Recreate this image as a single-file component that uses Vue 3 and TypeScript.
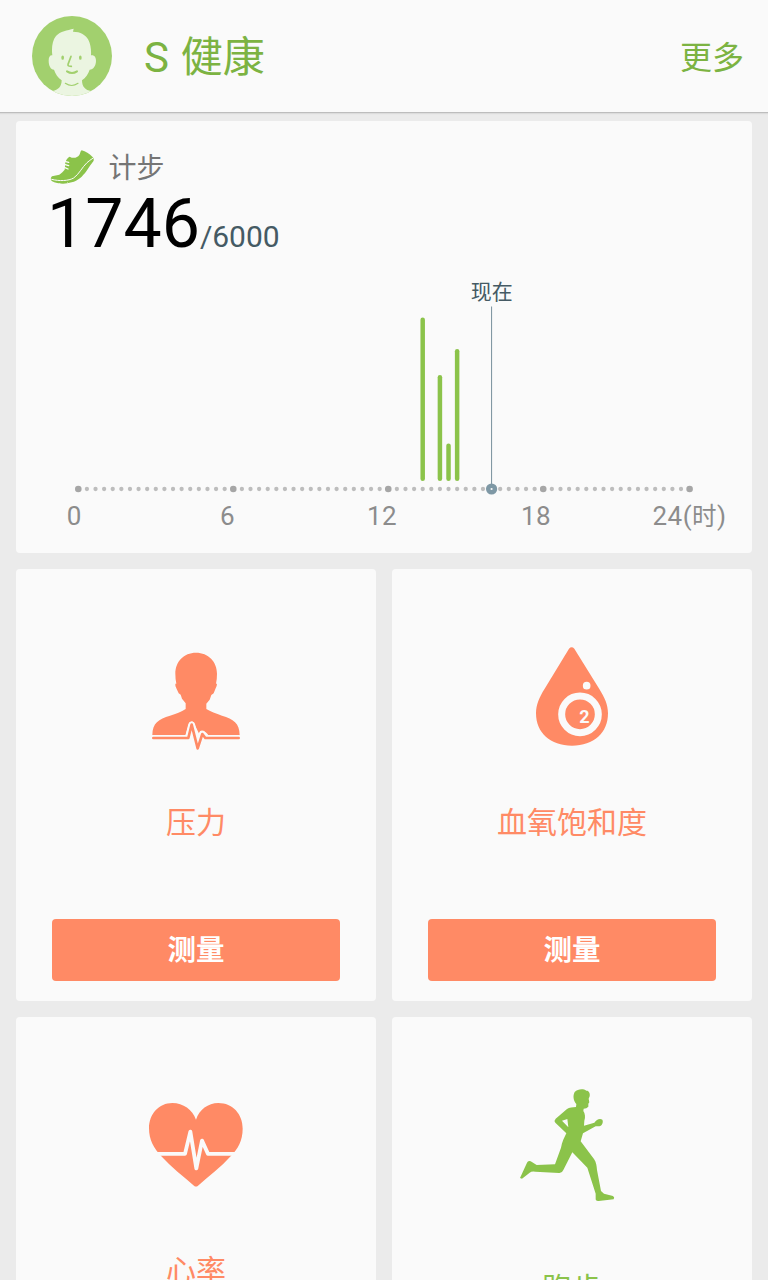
<script setup lang="ts">
interface Bar { slot: number; top: number }

const START = 62.3
const STEP = 8.61
const slotX = (slot: number): number => START + slot * STEP

const majorSlots: number[] = [0, 18, 36, 54, 71]
const dots = Array.from({ length: 72 }, (_, slot) => ({
  slot,
  x: slotX(slot),
  major: majorSlots.includes(slot),
}))
const bars: Bar[] = [
  { slot: 40, top: 196.5 },
  { slot: 42, top: 254 },
  { slot: 43, top: 322.5 },
  { slot: 44, top: 228 },
]
const nowX = slotX(48)
const labels = [
  { text: '0', unit: '', x: 58.2 },
  { text: '6', unit: '', x: 211.5 },
  { text: '12', unit: '', x: 366 },
  { text: '18', unit: '', x: 520 },
  { text: '24(', unit: '时', x: 673.5 },
]
</script>

<template>
  <div class="screen">
    <header class="bar">
      <svg class="avatar" viewBox="96 48 240 240">
        <defs><clipPath id="avatar-clip"><circle cx="216" cy="168" r="120" /></clipPath></defs>
        <g clip-path="url(#avatar-clip)">
          <rect x="96" y="48" width="240" height="240" fill="#a2d06e" />
          <path fill="#ebf5e1" d="M157 166C154 144 157 121 168 108C181 93 202 91 221 86L219 95C242 95 257 105 265 119C272 133 274 149 273 166C282 164 288 171 288 182C288 196 280 209 269 209C265 222 257 233 246 241C246 261 257 271 273 273L280 292H150L158 273C174 270 185 261 185 241C174 233 166 222 162 209C152 209 146 196 146 182C146 171 150 165 157 166Z" />
          <g fill="none" stroke="#a2d06e" stroke-linecap="round" stroke-linejoin="round">
            <path stroke-width="5" d="M213 169L204 193Q203 197 207 198L214 199" />
            <path stroke-width="6" d="M201 214Q216 224 231 214" />
            <path stroke-width="3.5" d="M196 250Q215 263 234 250" />
          </g>
          <ellipse cx="188" cy="173" rx="4" ry="6.5" fill="#a2d06e" />
          <ellipse cx="241" cy="173" rx="4" ry="6.5" fill="#a2d06e" />
        </g>
      </svg>
      <h1 class="title">S 健康</h1>
      <span class="more">更多</span>
    </header>

    <main class="grid">
      <section class="card steps">
        <div class="steps-head">
          <svg class="shoe" viewBox="60 42 135 108">
            <path fill="#8bc34a" d="M155 46C167 49 178 56 187 65C191 69 193 74 190 79C183 88 177 97 170 107C157 125 144 137 125 142C104 149 82 147 65 138C61 134 62 127 66 124L88 119C94 115 99 110 104 104L106 82C108 75 112 69 119 65C131 72 142 68 148 60C151 56 151 48 155 46Z" />
            <g fill="none" stroke="#fafafa" stroke-linecap="round">
              <path stroke-width="3" d="M65 133C88 139 115 138 131 129C147 118 156 97 171 83Q179 76 188 70" />
              <path stroke-width="4" d="M104 79L116 82M103 88L116 92M103 97L114 102" />
              <path stroke-width="2" d="M89 145L91 149M113 143L116 147" />
            </g>
          </svg>
          <span class="steps-name">计步</span>
        </div>
        <div class="count"><span class="value">1746</span><span class="goal">/6000</span></div>
        <svg class="chart" viewBox="0 148 736 284">
          <circle v-for="d in dots" :key="d.slot" :cx="d.x" cy="368" :r="d.major ? 3.3 : 2.15" :class="d.major ? 'dot-major' : 'dot'" />
          <line v-for="b in bars" :key="b.slot" class="step-bar" :x1="slotX(b.slot)" :x2="slotX(b.slot)" :y1="b.top + 2.2" y2="357.8" />
          <line class="now-line" :x1="nowX" :x2="nowX" y1="185.5" y2="364" />
          <circle :cx="nowX" cy="368" r="5.6" fill="#7e98a5" />
          <circle :cx="nowX" cy="368" r="1.1" fill="#fafafa" />
          <text class="now-label" :x="nowX + 0.2" y="177.5">现在</text>
          <text v-for="l in labels" :key="l.text" class="hour" :x="l.x" y="404">{{ l.text }}<template v-if="l.unit"><tspan class="unit">{{ l.unit }}</tspan><tspan>)</tspan></template></text>
        </svg>
      </section>

      <section class="card tile">
        <svg class="icon" viewBox="0 0 336 360">
          <path fill="#ff8a65" d="M168 38C205 38 231 65 231 101Q231 118 228 131H231Q231 137 227 145L221 160L214 165L209 179L199 191V207C211 214 228 221 246 227C280 237 299 249 299 285H204C198 272 184 271 178 283L165 256C162 241 148 241 145 257L137 285H37C37 249 56 237 90 227C108 221 124 216 137 207V190L126 176L122 164L116 160L109 145Q105 137 106 131H109Q106 118 106 101C106 65 131 38 168 38Z" />
          <path fill="none" stroke="#fafafa" stroke-width="21" stroke-linejoin="round" d="M137 294H145L155 255L172 322L187 282L196 294H204" />
          <path fill="none" stroke="#ff8a65" stroke-width="8" stroke-linejoin="round" stroke-linecap="round" d="M40 294H145L155 254L173 325L187 282L196 294H296" />
        </svg>
        <span class="name">压力</span>
        <button class="measure" type="button">测量</button>
      </section>

      <section class="card tile">
        <svg class="icon drop" viewBox="0 0 312 360">
          <path fill="#ff8a65" d="M147 41Q155 33 163 41L238 162C254 188 264 209 264 234C264 294 222 332 156 332C91 332 48 294 48 234C48 209 58 186 74 161Z" />
          <circle cx="180" cy="238" r="55" fill="none" stroke="#fafafa" stroke-width="21" />
          <circle cx="200" cy="152" r="11.5" fill="#fafafa" />
          <text x="193" y="264" class="o2">2</text>
        </svg>
        <span class="name">血氧饱和度</span>
        <button class="measure" type="button">测量</button>
      </section>

      <section class="card tile">
        <svg class="icon heart" viewBox="0 0 336 330">
          <path fill="#ff8a65" d="M168 89C178 59 204 39 235 39C278 39 308 72 308 116C308 152 294 176 272 199C242 232 207 259 174 287Q168 292 162 287C129 259 93 231 64 199C42 175 27 151 27 115C27 72 57 39 97 39C130 39 157 59 168 89Z" />
          <path fill="none" stroke="#fafafa" stroke-width="11.5" stroke-linejoin="round" d="M40 191.500H135L151 125L169 235L186 152L204 191.500H296" />
        </svg>
        <span class="name">心率</span>
      </section>

      <section class="card tile run">
        <svg class="icon runner" viewBox="0 0 342 390">
          <path fill="#8bc34a" fill-rule="evenodd" d="M194 36C203 27 219 25 229 32C236 31 241 39 239 49L236 56L238 67L235 71L235 80L229 85L221 86L220 93C225 101 227 111 223 122L222 137L253 128C259 118 270 114 277 119C281 127 276 137 268 139L257 139L219 160L212 184L252 237C259 247 260 258 261 270L273 333L282 341L309 348Q315 352 311 358L266 363Q256 364 257 355L257 341L232 263L187 217L160 270Q156 280 147 279L76 275Q65 273 59 278L36 296L30 294L51 248Q54 241 62 244L80 255L135 253L153 203C156 186 163 172 169 160L136 128Q131 122 137 116L171 87C178 82 188 82 198 81L199 72C190 62 188 47 194 36ZM156 122L175 142L172 117Z" />
        </svg>
        <span class="name">跑步</span>
      </section>
    </main>
  </div>
</template>

<style>
body { margin: 0; background: #ebebeb; }
</style>

<style scoped>
.screen {
  width: 768px;
  height: 1280px;
  overflow: hidden;
  background: #ebebeb;
  font-family: Roboto, "Noto Sans CJK SC", sans-serif;
}
.bar {
  box-sizing: border-box;
  height: 113px;
  padding: 0 24px 0 32px;
  display: flex;
  align-items: center;
  background: #fafafa;
  border-bottom: 1px solid #bdbdbd;
  box-shadow: 0 1px 1px #dcdcdc;
  color: #7cb342;
}
.avatar { width: 80px; height: 80px; margin-right: 32px; }
.title { margin: 0; padding-top: 4px; flex: 1; font-size: 42px; font-weight: 400; line-height: 60px; word-spacing: 1.5px; }
.more { padding-top: 4px; font-size: 32px; line-height: 48px; }
.grid {
  padding: 8px 16px;
  display: grid;
  grid-template-columns: 360px 360px;
  grid-auto-rows: 432px;
  gap: 16px;
}
.card { background: #fafafa; border-radius: 4px; overflow: hidden; }
.steps { grid-column: span 2; display: flex; flex-direction: column; }
.steps-head { height: 36px; padding: 28px 0 0 34px; display: flex; align-items: center; }
.shoe { width: 45px; height: 36px; margin-right: 13.5px; }
.steps-name { padding-top: 3px; font-size: 28px; line-height: 36px; color: #757575; }
.count { height: 84px; padding-left: 31px; line-height: 78px; white-space: nowrap; }
.value { font-size: 68px; color: #000; }
.goal { font-size: 30px; color: #455a64; }
.chart { display: block; width: 736px; height: 284px; }
.dot { fill: #bdbdbd; }
.dot-major { fill: #a6a6a6; }
.step-bar { stroke: #8bc34a; stroke-width: 4.5; stroke-linecap: round; }
.now-line { stroke: #78909c; stroke-width: 1; }
.now-label { font-size: 21px; fill: #455a64; text-anchor: middle; }
.hour { font-size: 26px; fill: #8c8c8c; text-anchor: middle; letter-spacing: 0.5px; }
.unit { font-size: 24.5px; }
.tile { display: flex; flex-direction: column; align-items: center; padding-top: 71px; box-sizing: border-box; }
.icon { width: 112px; height: 120px; flex: none; }
.drop { width: 104px; height: 120px; margin-top: -5px; margin-bottom: 5px; }
.heart { height: 110px; margin-top: 2px; margin-bottom: 8px; }
.runner { width: 114px; height: 130px; margin: -8px 10px 16px 0; }
.name { margin-top: 41px; font-size: 30px; line-height: 44px; color: #ff8a65; }
.measure {
  width: 288px;
  height: 62px;
  margin-top: 74px;
  padding: 2px 0 0;
  border: 0;
  border-radius: 4px;
  background: #ff8a65;
  color: #fff;
  font: 700 28.5px/60px Roboto, "Noto Sans CJK SC", sans-serif;
}
.o2 { font-size: 54px; font-weight: 700; fill: #fafafa; text-anchor: middle; }
.run .name { color: #8bc34a; }
</style>
